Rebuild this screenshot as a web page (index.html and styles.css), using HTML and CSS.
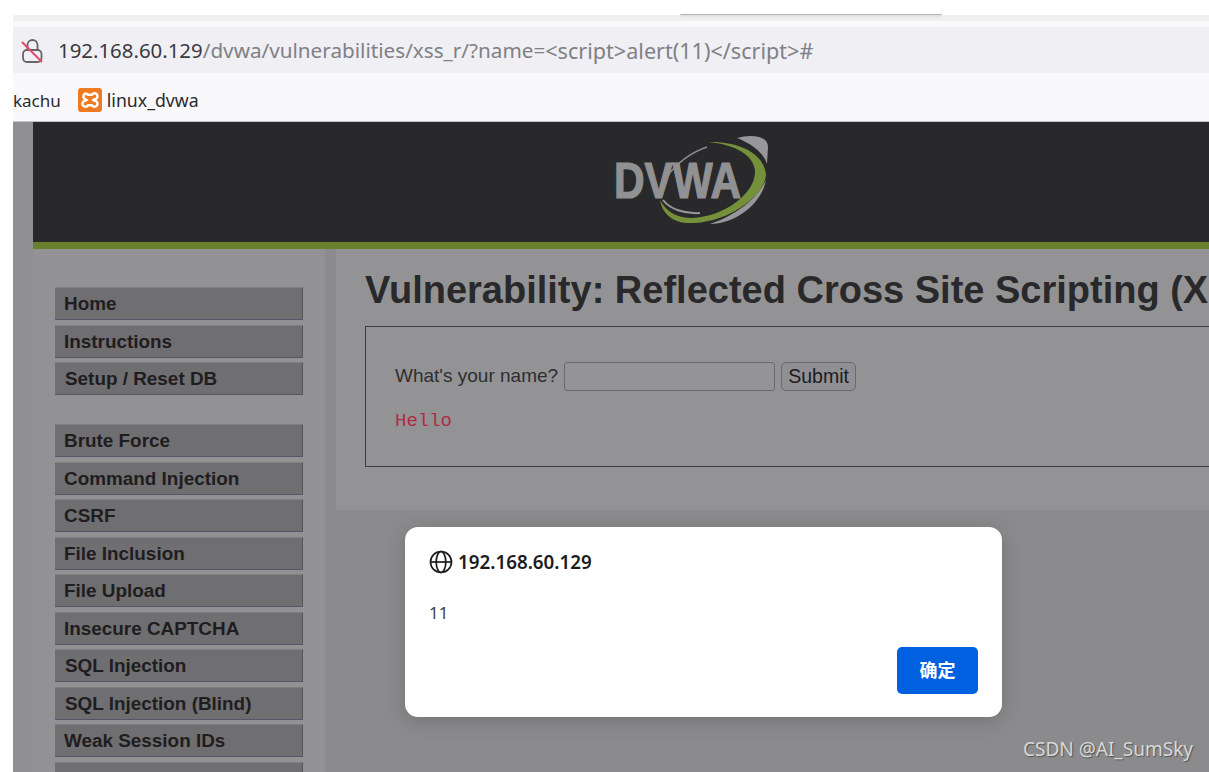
FILE: index.html
```html
<!DOCTYPE html>
<html lang="en">
<head>
  <meta charset="UTF-8">
  <title>Vulnerability: Reflected Cross Site Scripting (XSS)</title>
  <link rel="stylesheet" href="styles.css">
</head>
<body>
  <div class="window-top"><div class="tab-edge"></div></div>
  <div class="tab-strip"></div>
  <div class="toolbar">
    <div class="url-bar">
      <svg class="lock-icon" width="22" height="25" viewBox="0 0 22 25" fill="none">
        <path d="M6.500 12V7a5 5 0 0 1 10 0V12" stroke="#66666a" stroke-width="1.800"/>
        <rect x="2" y="12" width="18.500" height="12" rx="4" stroke="#66666a" stroke-width="1.800"/>
        <path d="M1 4L21 24" stroke="#e8476a" stroke-width="1.900"/>
      </svg>
      <span class="url-host">192.168.60.129</span><span class="url-path">/dvwa/vulnerabilities/xss_r/?name=</span><span class="url-query">&lt;script&gt;alert(11)&lt;/script&gt;#</span>
    </div>
  </div>
  <div class="bookmarks">
    <span class="bookmark bookmark-cut">kachu</span>
    <span class="bookmark">
      <svg class="xampp-icon" width="24" height="24" viewBox="0 0 24 24">
        <rect width="24" height="24" rx="3" fill="#ee7a22"/>
        <path d="M7.500 5.500a3 3 0 0 1 2.500 1.200h4a3 3 0 1 1 2.500 4.600L15.500 12l1 .700a3 3 0 1 1-2.500 4.600h-4a3 3 0 1 1-2.500-4.600l1-.700-1-.700a3 3 0 0 1 .500-5.800z" fill="none" stroke="#fff" stroke-width="2.400"/>
      </svg>
      linux_dvwa
    </span>
  </div>

  <div class="page">
    <div class="page-gutter"></div>
    <div class="page-inner">
      <div class="header">
        <svg class="logo" width="160" height="94" viewBox="0 0 160 94">
          <path d="M123 5C136 1 154 2 154 14L153 31C150 20 138 11 123 5z" fill="#98989a"/>
          <path d="M93 14C78 19 62 30 53 44" fill="none" stroke="#8d8d8f" stroke-width="1.500"/>
          <path d="M49 67C56 76 70 81 86 80" fill="none" stroke="#98989a" stroke-width="2"/>
          <path d="M152 47C148 70 122 91 96 91C118 84 142 68 152 47z" fill="#98989a"/>
          <path d="M94 9C125 8 150 20 152 42C150 65 110 92 72 90C58 89 48 80 46 67C52 78 62 85 78 85C110 84 142 60 141 38C140 22 120 11 94 9z" fill="#75903a"/>
          <text x="0" y="65" class="logo-text" textLength="127" lengthAdjust="spacingAndGlyphs">DVWA</text>
        </svg>
      </div>
      <div class="accent"></div>
      <div class="content">
        <nav class="sidebar">
          <ul class="menu">
            <li>Home</li>
            <li>Instructions</li>
            <li class="nudge">Setup / Reset DB</li>
          </ul>
          <ul class="menu">
            <li>Brute Force</li>
            <li>Command Injection</li>
            <li>CSRF</li>
            <li>File Inclusion</li>
            <li>File Upload</li>
            <li>Insecure CAPTCHA</li>
            <li class="nudge">SQL Injection</li>
            <li class="nudge">SQL Injection (Blind)</li>
            <li>Weak Session IDs</li>
            <li>XSS (DOM)</li>
          </ul>
        </nav>
        <main class="main">
          <h1>Vulnerability: Reflected Cross Site Scripting (XSS)</h1>
          <div class="vuln-box">
            <form class="name-form">
              <label for="name">What's your name?</label>
              <input type="text" id="name">
              <button type="button">Submit</button>
            </form>
            <pre class="hello">Hello</pre>
          </div>
        </main>
      </div>
    </div>
  </div>

  <div class="dialog">
    <div class="dialog-title">
      <svg width="24" height="24" viewBox="0 0 24 24" fill="none" stroke="#1c1c20" stroke-width="1.700">
        <circle cx="12" cy="12" r="10.500"/>
        <ellipse cx="12" cy="12" rx="4.800" ry="10.500"/>
        <path d="M1.500 12h21"/>
      </svg>
      <span>192.168.60.129</span>
    </div>
    <p class="dialog-text">11</p>
    <div class="dialog-actions">
      <button type="button" class="ok-btn">确定</button>
    </div>
  </div>

  <div class="watermark">CSDN @AI_SumSky</div>
</body>
</html>
```

FILE: styles.css
```css
html, body {
  margin: 0;
  height: 772px;
  overflow: hidden;
}
body {
  position: relative;
  padding-left: 13px;
  background: #fff;
  font-family: "Liberation Sans", Arial, sans-serif;
  box-sizing: border-box;
}

/* browser chrome */
.window-top {
  height: 15px;
  position: relative;
}
.tab-edge {
  position: absolute;
  left: 667px;
  bottom: 0;
  width: 262px;
  height: 1px;
  background: #b5b5b7;
  box-shadow: 0 1px 3px rgba(0,0,0,0.2);
  border-radius: 0 0 6px 6px;
}
.tab-strip {
  height: 6px;
  background: #f0f0f0;
}
.toolbar {
  padding-top: 6px;
  background: #fafafb;
}
.url-bar {
  height: 46px;
  background: #efeff4;
  display: flex;
  align-items: center;
  padding-left: 8px;
  font-family: "Noto Sans", sans-serif;
  white-space: nowrap;
}
.lock-icon {
  margin-right: 15px;
}
.url-host {
  color: #3a3a3e;
  font-size: 20.400px;
}
.url-path {
  color: #808085;
  font-size: 20.700px;
}
.url-query {
  color: #808085;
  font-size: 21.600px;
}
.bookmarks {
  height: 49px;
  box-sizing: border-box;
  padding-top: 6px;
  background: #f9f9fb;
  border-bottom: 1px solid #c4c4c6;
  display: flex;
  align-items: center;
  gap: 17px;
  font-family: "Noto Sans", sans-serif;
  font-size: 17.700px;
  color: #2b2b30;
}
.bookmark {
  display: flex;
  align-items: center;
  gap: 5px;
}
.bookmark-cut {
  font-size: 17px;
}

/* dvwa page, dimmed by the alert */
.page {
  display: flex;
  height: 650px;
  overflow: hidden;
  background: #8b8b8d;
}
.page-gutter {
  width: 20px;
  flex-shrink: 0;
  background: #909092;
}
.page-inner {
  flex: 1;
  min-width: 0;
}
.header {
  height: 120px;
  box-sizing: border-box;
  padding: 11px 0 0 581px;
  background: #29292b;
}
.logo {
  display: block;
}
.logo-text {
  font-family: "Liberation Sans", sans-serif;
  font-weight: bold;
  font-size: 50px;
  fill: #919193;
  stroke: #919193;
  stroke-width: 1.200;
}
.accent {
  height: 7px;
  background: #6a7f2b;
}
.content {
  display: flex;
}
.sidebar {
  width: 292px;
  flex-shrink: 0;
  box-sizing: border-box;
  padding: 38px 22px 0 22px;
  background: #929294;
}
.menu {
  list-style: none;
  margin: 0 0 29px;
  padding: 0;
}
.menu li {
  height: 33px;
  box-sizing: border-box;
  margin-bottom: 4.500px;
  padding-left: 9px;
  background: #6f6e70;
  border-top: 1px solid #7f7f82;
  border-right: 1px solid #55555f;
  border-bottom: 1px solid #55566a;
  color: #1f1d20;
  font-size: 18.900px;
  font-weight: bold;
  line-height: 31px;
  white-space: nowrap;
}
.menu li.nudge {
  padding-left: 10px;
}
.main {
  margin-left: 11px;
  flex: 1;
  min-width: 0;
  height: 261px;
  box-sizing: border-box;
  padding: 18px 0 0 29px;
  background: #939395;
  white-space: nowrap;
  overflow: hidden;
}
h1 {
  margin: 0 0 12px;
  color: #29292b;
  font-size: 38px;
  font-weight: bold;
  line-height: 47px;
}
.vuln-box {
  height: 141px;
  box-sizing: border-box;
  width: 1000px;
  border: 1.500px solid #3c3c3e;
  padding: 35px 0 0 29px;
}
.name-form {
  display: flex;
  align-items: center;
  color: #2e2e30;
  font-size: 19px;
}
.name-form label {
  margin-top: -2px;
}
.name-form input {
  width: 211px;
  height: 29px;
  box-sizing: border-box;
  margin: 0 6px;
  background: #949496;
  border: 1.500px solid #69696f;
  border-radius: 3px;
}
.name-form button {
  width: 75px;
  height: 29px;
  padding: 0;
  background: #8f8f94;
  border: 1.500px solid #69696f;
  border-radius: 5px;
  color: #1c1c1e;
  font-family: "Liberation Sans", sans-serif;
  font-size: 19.500px;
}
.hello {
  margin: 19px 0 0;
  color: #b02c40;
  font-family: "Liberation Mono", monospace;
  font-size: 19px;
}

/* alert dialog over the page */
.dialog {
  position: absolute;
  left: 405px;
  top: 527px;
  width: 597px;
  height: 190px;
  box-sizing: border-box;
  padding: 22px 24px 23px;
  background: #fff;
  border-radius: 13px;
  box-shadow: 0 4px 20px rgba(0,0,0,0.18);
  font-family: "Noto Sans", sans-serif;
}
.dialog-title {
  display: flex;
  align-items: center;
  gap: 5px;
  color: #1c1c20;
  font-size: 18.800px;
  font-weight: 600;
}
.dialog-text {
  margin: 26px 0 0;
  color: #404040;
  font-size: 17px;
  line-height: 24px;
}
.dialog-actions {
  display: flex;
  justify-content: flex-end;
  margin-top: 22px;
}
.ok-btn {
  width: 81px;
  height: 47px;
  padding: 0 0 3px;
  background: #0060df;
  border: 0;
  border-radius: 5px;
  color: #fff;
  font-family: "Noto Sans CJK SC", sans-serif;
  font-size: 18px;
  font-weight: bold;
}
.watermark {
  position: absolute;
  right: 16px;
  bottom: 10px;
  color: #d8d8d8;
  font-family: "Noto Sans", sans-serif;
  font-size: 19px;
  text-shadow: 1px 1px 1px #555;
}
```
